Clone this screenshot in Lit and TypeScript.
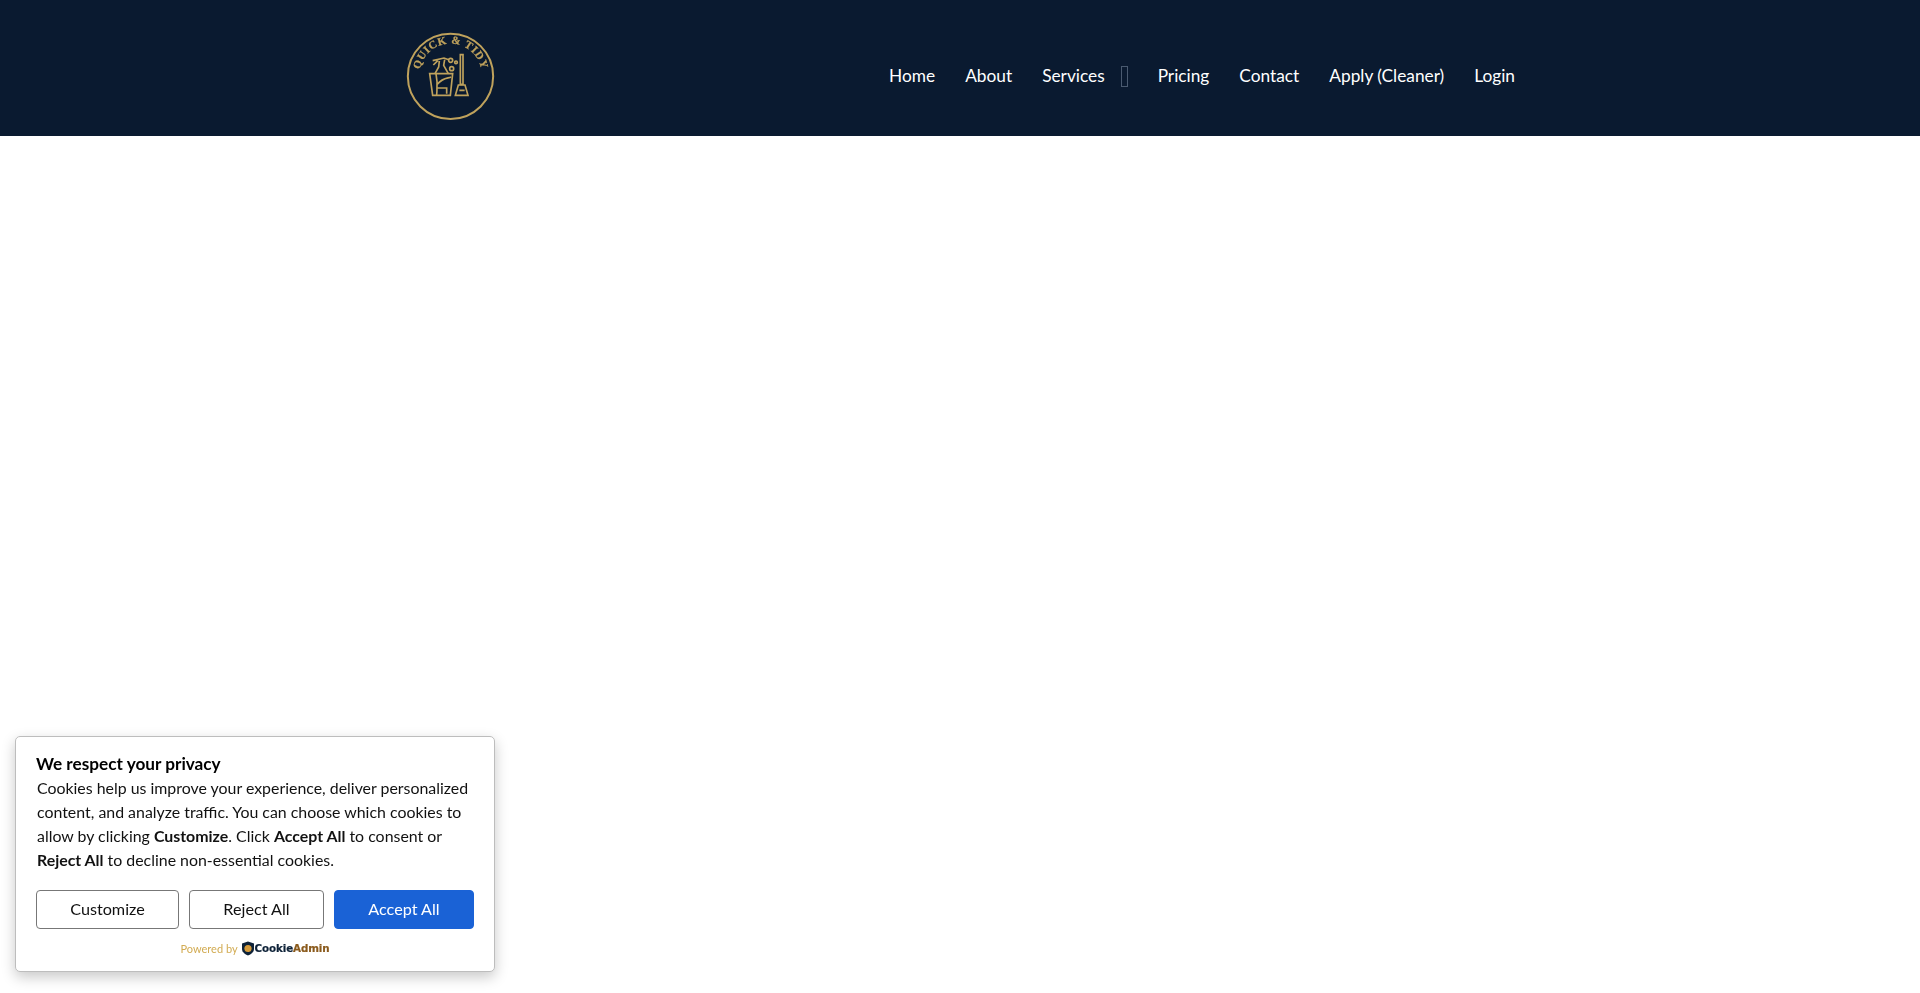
import { LitElement, html, css, svg } from "lit";
import { customElement } from "lit/decorators.js";

const GOLD = "#bfa25c";

@customElement("app-root")
export class AppRoot extends LitElement {
  static styles = css`
    :host {
      display: block;
      min-height: 993px;
      background: #fff;
      font-family: Lato, "Liberation Sans", sans-serif;
      overflow: hidden;
    }
    .header {
      height: 136px;
      background: #0a1a30;
      display: flex;
      align-items: center;
      justify-content: space-between;
      padding: 0 405px 0 406px;
      box-sizing: border-box;
    }
    .logo {
      width: 89px;
      height: 89px;
      display: block;
      margin-top: 16px;
      filter: blur(0.3px);
    }
    .nav {
      display: flex;
      align-items: center;
      gap: 30px;
      margin-top: 15px;
    }
    .nav a {
      color: #fff;
      font-size: 17.3px;
      line-height: 24px;
      text-decoration: none;
      display: flex;
      align-items: center;
    }
    .caret {
      display: inline-block;
      box-sizing: content-box;
      width: 5px;
      height: 19px;
      border: 1px solid #4a5a70;
      margin-left: 16px;
      margin-top: 1px;
    }
    .cookie {
      position: fixed;
      left: 15px;
      bottom: 21px;
      width: 480px;
      height: 236px;
      box-sizing: border-box;
      background: #fff;
      border: 1px solid #bdbdbd;
      border-radius: 5px;
      box-shadow: 0 5px 14px rgba(0, 0, 0, 0.22);
      padding: 15px 20px 0 20px;
      color: #111;
    }
    .title {
      font-size: 17.2px;
      font-weight: 700;
      line-height: 24px;
      color: #000;
    }
    .body {
      font-size: 15.9px;
      line-height: 24px;
      padding-left: 1px;
      color: #111;
    }
    .body b {
      font-weight: 700;
    }
    .buttons {
      display: flex;
      justify-content: space-between;
      margin-top: 18px;
    }
    .btn {
      height: 39px;
      box-sizing: border-box;
      border: 1px solid #777;
      border-radius: 4px;
      background: #fff;
      color: #111;
      font: 400 16.2px/35px Lato, "Liberation Sans", sans-serif;
      padding: 0 0 2px;
      text-align: center;
    }
    .b1 { width: 143px; }
    .b2 { width: 135px; }
    .b3 {
      width: 140px;
      background: #1a62d6;
      border-color: #1a62d6;
      color: #fff;
    }
    .powered {
      display: flex;
      align-items: center;
      justify-content: center;
      margin-top: 9px;
      height: 20px;
      font-size: 11px;
      color: #d2ab52;
    }
    .shield {
      width: 14px;
      height: 15px;
      margin: 0 0 0 3px;
      display: block;
    }
    .brand {
      font-family: "DejaVu Sans", sans-serif;
      font-weight: 700;
      font-size: 10.3px;
      letter-spacing: -0.1px;
      -webkit-text-stroke: 0.2px currentColor;
      color: #0e2238;
    }
    .brand span {
      color: #8a5a1c;
    }
  `;

  private logo() {
    return html`<svg class="logo" viewBox="78 65 267 267" fill="none" stroke="${GOLD}" stroke-width="5">
      ${svg`
      <circle cx="211.5" cy="198" r="128" stroke-width="6"></circle>
      <path id="arc" d="M120 178 A93 93 0 0 1 302 170" stroke="none"></path>
      <text font-family="Liberation Serif, serif" font-weight="700" font-size="33" fill="${GOLD}" stroke="${GOLD}" stroke-width="0.8" letter-spacing="2">
        <textPath href="#arc">QUICK &amp; TIDY</textPath>
      </text>
      <path d="M158 151 L192 143 L206 148 M160 164 L174 150 M194 148 L191 165 L205 190 M178 152 L176 170 L165 190"></path>
      <path d="M149 190 H218 L211 255 H158 Z"></path>
      <path d="M168 190 C175 225 170 240 170 255 M172 222 C190 200 205 205 213 200 M172 233 H200 V250"></path>
      <circle cx="212" cy="150" r="6"></circle>
      <circle cx="228" cy="156" r="4"></circle>
      <circle cx="215" cy="175" r="6"></circle>
      <path d="M241 133 H249 V222 H241 Z"></path>
      <path d="M235 224 H255 L264 255 H226 Z M238 240 H254"></path>
      `}
    </svg>`;
  }

  render() {
    return html`
      <header class="header">
        ${this.logo()}
        <nav class="nav">
          <a>Home</a>
          <a>About</a>
          <a>Services<span class="caret"></span></a>
          <a>Pricing</a>
          <a>Contact</a>
          <a>Apply (Cleaner)</a>
          <a>Login</a>
        </nav>
      </header>
      <aside class="cookie">
        <div class="title">We respect your privacy</div>
        <div class="body">
          Cookies help us improve your experience, deliver personalized content, and analyze traffic. You can choose which cookies to allow by clicking <b>Customize</b>. Click <b>Accept All</b> to consent or <b>Reject All</b> to decline non-essential cookies.
        </div>
        <div class="buttons">
          <button class="btn b1">Customize</button>
          <button class="btn b2">Reject All</button>
          <button class="btn b3">Accept All</button>
        </div>
        <div class="powered">
          Powered by
          <svg class="shield" viewBox="0 0 14 15">
            <path d="M7 0.5 L13 2.5 V8 C13 11 10 13.5 7 14.5 C4 13.5 1 11 1 8 V2.5 Z" fill="#0e2238"></path>
            <circle cx="7" cy="7.5" r="3.6" fill="#d69b3a"></circle>
          </svg>
          <span class="brand">Cookie<span>Admin</span></span>
        </div>
      </aside>
    `;
  }
}
